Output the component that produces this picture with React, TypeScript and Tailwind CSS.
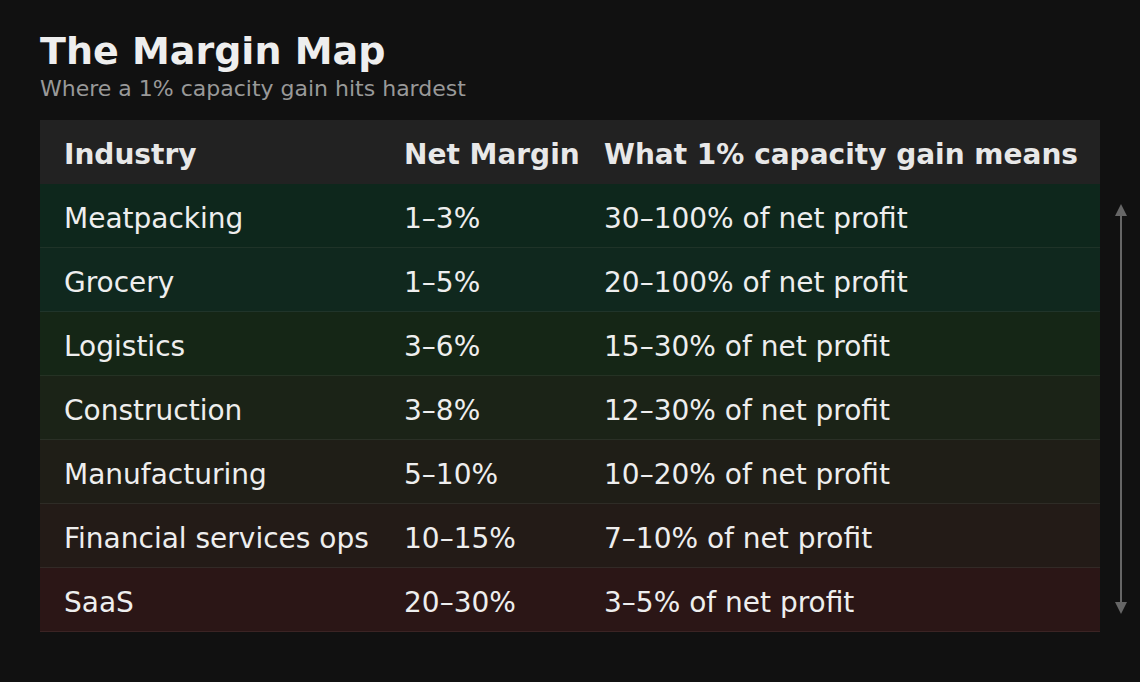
const rows = [
  { industry: "Meatpacking", margin: "1–3%", gain: "30–100% of net profit", bg: "bg-[#0e271c]", line: "border-[#1f3328]" },
  { industry: "Grocery", margin: "1–5%", gain: "20–100% of net profit", bg: "bg-[#10281e]", line: "border-[#20342a]" },
  { industry: "Logistics", margin: "3–6%", gain: "15–30% of net profit", bg: "bg-[#152616]", line: "border-[#253224]" },
  { industry: "Construction", margin: "3–8%", gain: "12–30% of net profit", bg: "bg-[#1b2317]", line: "border-[#2a3026]" },
  { industry: "Manufacturing", margin: "5–10%", gain: "10–20% of net profit", bg: "bg-[#1f1e17]", line: "border-[#2e2c26]" },
  { industry: "Financial services ops", margin: "10–15%", gain: "7–10% of net profit", bg: "bg-[#231b17]", line: "border-[#322a26]" },
  { industry: "SaaS", margin: "20–30%", gain: "3–5% of net profit", bg: "bg-[#2b1616]", line: "border-[#3b2424]" },
];

const Arrow = () => (
  <svg width="14" height="410" viewBox="0 0 14 410" className="block">
    <polygon points="7,0 1,12 13,12" fill="#666666" />
    <rect x="6" y="11" width="2" height="388" fill="#666666" />
    <polygon points="7,410 1,398 13,398" fill="#666666" />
  </svg>
);

export default function App() {
  return (
    <div
      className="min-h-screen w-full bg-[#111111] px-10 pt-[32px] text-[#eeeeee]"
      style={{ fontFamily: '"DejaVu Sans", Verdana, sans-serif' }}
    >
      <h1 className="text-[38px] font-bold leading-none">The Margin Map</h1>
      <p className="mt-[8px] text-[22px] leading-none text-[#999999]">
        Where a 1% capacity gain hits hardest
      </p>

      <div className="mt-5 flex">
        <div className="w-[1060px]">
          <div className="grid h-16 grid-cols-[340px_200px_1fr] items-center whitespace-nowrap bg-[#222222] pt-[5px] text-[28px] font-bold leading-none text-[#e8e8e8]">
            <div className="px-6">Industry</div>
            <div className="px-6">Net Margin</div>
            <div className="px-6">What 1% capacity gain means</div>
          </div>
          {rows.map((r) => (
            <div
              key={r.industry}
              className={`grid h-16 grid-cols-[340px_200px_1fr] items-center whitespace-nowrap border-b pt-[6px] text-[28px] leading-none ${r.bg} ${r.line}`}
            >
              <div className="px-6">{r.industry}</div>
              <div className="px-6">{r.margin}</div>
              <div className="px-6">{r.gain}</div>
            </div>
          ))}
        </div>
        <div className="ml-[14px] mt-[84px]">
          <Arrow />
        </div>
      </div>
    </div>
  );
}
